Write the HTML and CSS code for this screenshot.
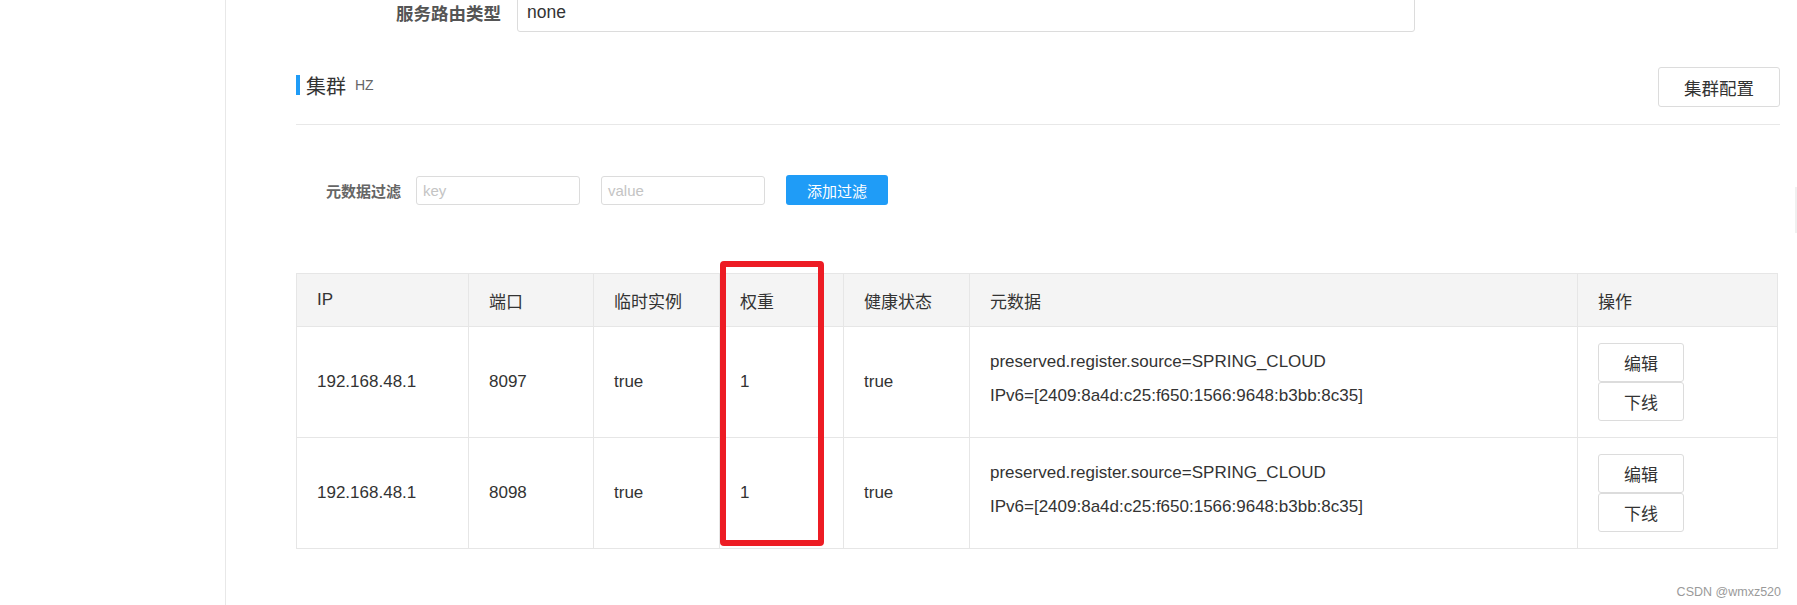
FILE: index.html
```html
<!DOCTYPE html>
<html lang="zh-CN">
<head>
<meta charset="utf-8">
<title>集群 HZ</title>
<link rel="stylesheet" href="styles.css">
</head>
<body>
<div class="page">
  <aside class="sidebar"></aside>
  <main class="main">
    <div class="form-row">
      <label class="form-label">服务路由类型</label>
      <div class="form-input">none</div>
    </div>

    <div class="cluster-head">
      <div class="cluster-title">
        <span class="bar"></span>
        <span class="name">集群</span>
        <span class="sub">HZ</span>
      </div>
      <button class="btn-config">集群配置</button>
    </div>

    <div class="filter">
      <span class="filter-label">元数据过滤</span>
      <div class="filter-input">key</div>
      <div class="filter-input">value</div>
      <button class="btn-primary">添加过滤</button>
    </div>

    <div class="table-wrap">
      <table class="grid">
        <colgroup>
          <col class="c-ip"><col class="c-port"><col class="c-eph"><col class="c-weight"><col class="c-health"><col class="c-meta"><col class="c-op">
        </colgroup>
        <thead>
          <tr>
            <th>IP</th><th>端口</th><th>临时实例</th><th>权重</th><th>健康状态</th><th>元数据</th><th>操作</th>
          </tr>
        </thead>
        <tbody>
          <tr>
            <td>192.168.48.1</td>
            <td>8097</td>
            <td>true</td>
            <td>1</td>
            <td>true</td>
            <td><div class="meta"><div>preserved.register.source=SPRING_CLOUD</div><div>IPv6=[2409:8a4d:c25:f650:1566:9648:b3bb:8c35]</div></div></td>
            <td><button class="op-btn">编辑</button><button class="op-btn">下线</button></td>
          </tr>
          <tr>
            <td>192.168.48.1</td>
            <td>8098</td>
            <td>true</td>
            <td>1</td>
            <td>true</td>
            <td><div class="meta"><div>preserved.register.source=SPRING_CLOUD</div><div>IPv6=[2409:8a4d:c25:f650:1566:9648:b3bb:8c35]</div></div></td>
            <td><button class="op-btn">编辑</button><button class="op-btn">下线</button></td>
          </tr>
        </tbody>
      </table>
      <div class="highlight"></div>
    </div>
  </main>
  <div class="scroll-hint"></div>
  <div class="watermark">CSDN @wmxz520</div>
</div>
</body>
</html>
```

FILE: styles.css
```css
html, body {
  margin: 0;
  padding: 0;
  background: #fff;
}
body {
  font-family: "Liberation Sans", "Noto Sans CJK SC", sans-serif;
  color: #333;
}
.page {
  position: relative;
  display: flex;
  width: 1797px;
  height: 605px;
  overflow: hidden;
}
.sidebar {
  flex: none;
  width: 225px;
  border-right: 1px solid #e8e8e8;
}
.main {
  flex: 1;
  padding: 0 17px 0 70px;
}

/* top form row */
.form-row {
  display: flex;
  align-items: center;
  height: 40px;
  margin-top: -8px;
}
.form-label {
  width: 205px;
  margin-right: 16px;
  text-align: right;
  font-size: 17.5px;
  font-weight: bold;
  color: #555;
}
.form-input {
  box-sizing: border-box;
  width: 898px;
  height: 40px;
  padding: 0 9px;
  display: flex;
  align-items: center;
  border: 1px solid #dcdcdc;
  border-radius: 3px;
  font-size: 17.5px;
  color: #333;
}

/* cluster head */
.cluster-head {
  display: flex;
  align-items: center;
  justify-content: space-between;
  height: 40px;
  margin-top: 35px;
  padding-bottom: 17px;
  border-bottom: 1px solid #e8e8e8;
}
.cluster-title {
  display: flex;
  align-items: center;
  margin-top: -4px;
}
.bar {
  width: 4px;
  height: 20px;
  background: #1f9cf7;
  margin-right: 6px;
}
.name {
  font-size: 20px;
  color: #333;
}
.sub {
  font-size: 14px;
  color: #666;
  margin-left: 9px;
}
.btn-config {
  box-sizing: border-box;
  width: 122px;
  height: 40px;
  border: 1px solid #dcdcdc;
  border-radius: 3px;
  background: #fff;
  font-family: inherit;
  font-size: 17.5px;
  color: #333;
  padding: 0;
}

/* filter */
.filter {
  display: flex;
  align-items: center;
  height: 30px;
  margin-top: 50px;
  padding-left: 30px;
}
.filter-label {
  font-size: 15px;
  font-weight: bold;
  color: #666;
  margin-right: 15px;
}
.filter-input {
  box-sizing: border-box;
  width: 164px;
  height: 29px;
  margin-right: 21px;
  padding: 0 6px;
  display: flex;
  align-items: center;
  border: 1px solid #dcdcdc;
  border-radius: 3px;
  font-size: 15px;
  color: #c4c4c4;
}
.btn-primary {
  width: 102px;
  height: 30px;
  border: none;
  border-radius: 3px;
  background: #1f9cf7;
  color: #fff;
  font-family: inherit;
  font-size: 15px;
  padding: 0;
}

/* table */
.table-wrap {
  position: relative;
  width: 1481px;
  margin-top: 68px;
}
.grid {
  width: 1481px;
  border-collapse: collapse;
  table-layout: fixed;
  font-size: 17px;
  color: #333;
}
.c-ip { width: 172px; }
.c-port { width: 125px; }
.c-eph { width: 126px; }
.c-weight { width: 124px; }
.c-health { width: 126px; }
.c-meta { width: 608px; }
.c-op { width: 200px; }
.grid th,
.grid td {
  border: 1px solid #e6e6e6;
  padding: 0 20px;
  text-align: left;
  font-weight: normal;
  vertical-align: middle;
}
.grid th {
  background: #f4f4f4;
  height: 52px;
}
.grid td {
  height: 110px;
}
.meta {
  line-height: 34px;
  padding-bottom: 7px;
}
.op-btn {
  display: block;
  box-sizing: border-box;
  width: 86px;
  height: 39px;
  padding: 0;
  border: 1px solid #dcdcdc;
  border-radius: 3px;
  background: #fff;
  font-family: inherit;
  font-size: 17px;
  color: #333;
}
.highlight {
  position: absolute;
  left: 424px;
  top: -12px;
  width: 104px;
  height: 285px;
  box-sizing: border-box;
  border: 6.5px solid #ed1c24;
  border-radius: 4px;
}

.scroll-hint {
  position: absolute;
  right: 0;
  top: 187px;
  width: 2px;
  height: 46px;
  background: #f0f0f0;
}
.watermark {
  position: absolute;
  right: 16px;
  bottom: 6px;
  font-size: 12.5px;
  color: #9a9a9a;
}
```
